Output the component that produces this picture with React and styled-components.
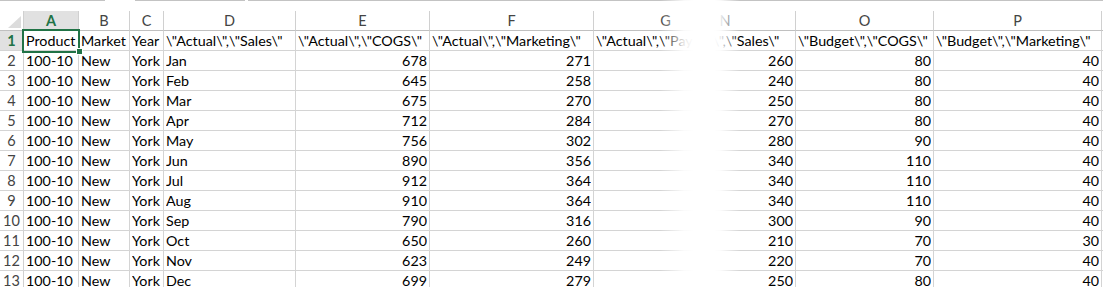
import React from "react";
import styled, { createGlobalStyle } from "styled-components";

const GlobalStyle = createGlobalStyle`
  body {
    margin: 0;
    background: #ffffff;
    font-family: Lato, "Liberation Sans", sans-serif;
  }
`;

const months = ["Jan", "Feb", "Mar", "Apr", "May", "Jun", "Jul", "Aug", "Sep", "Oct", "Nov", "Dec"];
const cogs = [678, 645, 675, 712, 756, 890, 912, 910, 790, 650, 623, 699];
const marketing = [271, 258, 270, 284, 302, 356, 364, 364, 316, 260, 249, 279];
const budgetSales = [260, 240, 250, 270, 280, 340, 340, 340, 300, 210, 220, 250];
const budgetCogs = [80, 80, 80, 80, 90, 110, 110, 110, 90, 70, 70, 80];
const budgetMkt = [40, 40, 40, 40, 40, 40, 40, 40, 40, 30, 40, 40];

const leftCols = [
  { key: "A", w: 55 },
  { key: "B", w: 51 },
  { key: "C", w: 34 },
  { key: "D", w: 132 },
  { key: "E", w: 134 },
  { key: "F", w: 164 },
  { key: "G", w: 144 },
];

const rightCols = [
  { key: "N", w: 141 },
  { key: "O", w: 138 },
  { key: "P", w: 168 },
  { key: "Q", w: 80 },
];

const titles = {
  A: "Product",
  B: "Market",
  C: "Year",
  D: '\\"Actual\\",\\"Sales\\"',
  E: '\\"Actual\\",\\"COGS\\"',
  F: '\\"Actual\\",\\"Marketing\\"',
  G: '\\"Actual\\",\\"Payroll\\"',
  N: '\\"Budget\\",\\"Sales\\"',
  O: '\\"Budget\\",\\"COGS\\"',
  P: '\\"Budget\\",\\"Marketing\\"',
  Q: "",
};

function valueFor(key, i) {
  switch (key) {
    case "A": return { text: "100-10" };
    case "B": return { text: "New" };
    case "C": return { text: "York" };
    case "D": return { text: months[i] };
    case "E": return { text: cogs[i], num: true };
    case "F": return { text: marketing[i], num: true };
    case "N": return { text: budgetSales[i], num: true };
    case "O": return { text: budgetCogs[i], num: true };
    case "P": return { text: budgetMkt[i], num: true };
    default: return { text: "" };
  }
}

const Page = styled.div`
  position: relative;
  width: 1103px;
  height: 287px;
  overflow: hidden;
  background: #fff;
`;

const TopEdge = styled.div`
  display: flex;
  height: 11px;
`;

const EdgeSegment = styled.div`
  height: 1px;
  background: #c3c3c3;
  width: ${(p) => (p.$w ? `${p.$w}px` : "auto")};
  flex: ${(p) => (p.$w ? "0 0 auto" : "1")};
  margin-left: ${(p) => p.$gap || 0}px;
`;

const Sheet = styled.div`
  display: flex;
`;

const Pane = styled.div`
  overflow: hidden;
  flex: ${(p) => (p.$w ? `0 0 ${p.$w}px` : "1")};
`;

const Grid = styled.div`
  width: max-content;
  margin-left: ${(p) => p.$shift || 0}px;
`;

const Row = styled.div`
  display: flex;
  height: 20px;
`;

const Corner = styled.div`
  width: 24px;
  height: 20px;
  box-sizing: border-box;
  border-right: 1px solid #d0d0d0;
  border-bottom: 1px solid #c0c0c0;
  display: flex;
  align-items: flex-end;
  justify-content: flex-end;
  padding: 0 2px 2px 0;
`;

const ColHead = styled.div`
  width: ${(p) => p.$w}px;
  height: 20px;
  box-sizing: border-box;
  border-right: 1px solid #d0d0d0;
  border-bottom: 1px solid #c0c0c0;
  background: ${(p) => (p.$active ? "#e1e1e1" : "#fff")};
  color: ${(p) => (p.$active ? "#217346" : "#444")};
  font-weight: ${(p) => (p.$active ? 700 : 400)};
  font-size: 14.5px;
  line-height: 19px;
  text-align: center;
`;

const RowHead = styled.div`
  width: 24px;
  height: 20px;
  box-sizing: border-box;
  border-right: 1px solid #d0d0d0;
  border-bottom: 1px solid #d4d4d4;
  background: ${(p) => (p.$active ? "#e1e1e1" : "#fff")};
  color: ${(p) => (p.$active ? "#217346" : "#444")};
  font-weight: ${(p) => (p.$active ? 700 : 400)};
  font-size: 14.5px;
  line-height: 20px;
  text-align: center;
  flex-shrink: 0;
`;

const Cell = styled.div`
  position: relative;
  width: ${(p) => p.$w}px;
  height: 20px;
  box-sizing: border-box;
  border-right: 1px solid #d4d4d4;
  border-bottom: 1px solid #d4d4d4;
  padding: 0 2px;
  font-size: 14.3px;
  line-height: 20px;
  color: #000;
  text-align: ${(p) => (p.$num ? "right" : "left")};
  white-space: nowrap;
  flex-shrink: 0;
`;

const CellText = styled.div`
  overflow: hidden;
`;

const ActiveFrame = styled.div`
  position: absolute;
  left: -2px;
  top: -2px;
  width: 58px;
  height: 24px;
  box-sizing: border-box;
  border: 2px solid #217346;
  z-index: 2;
  pointer-events: none;
`;

const FillHandle = styled.div`
  position: absolute;
  left: 52px;
  top: 17px;
  width: 5px;
  height: 5px;
  background: #217346;
  border: 1px solid #fff;
  z-index: 3;
`;

const Tear = styled.div`
  position: absolute;
  top: 0;
  bottom: 0;
  left: 660px;
  width: 80px;
  background: linear-gradient(
    to right,
    rgba(255, 255, 255, 0) 0%,
    rgba(255, 255, 255, 0.9) 30%,
    #fff 42%,
    #fff 68%,
    rgba(255, 255, 255, 0.9) 76%,
    rgba(255, 255, 255, 0) 100%
  );
  z-index: 5;
`;

function CornerMark() {
  return (
    <Corner>
      <svg width="13" height="12" viewBox="0 0 13 12">
        <polygon points="13,0 13,12 0,12" fill="#dcdcdc" />
      </svg>
    </Corner>
  );
}

function HeaderRow({ cols, withCorner }) {
  return (
    <Row>
      {withCorner && <CornerMark />}
      {cols.map((c) => (
        <ColHead key={c.key} $w={c.w} $active={c.key === "A"}>
          {c.key === "Q" ? "" : c.key}
        </ColHead>
      ))}
    </Row>
  );
}

function TitleRow({ cols, withHead }) {
  return (
    <Row>
      {withHead && <RowHead $active>1</RowHead>}
      {cols.map((c) => (
        <Cell key={c.key} $w={c.w}>
          <CellText>{titles[c.key]}</CellText>
          {c.key === "A" && (
            <>
              <ActiveFrame />
              <FillHandle />
            </>
          )}
        </Cell>
      ))}
    </Row>
  );
}

function DataRows({ cols, withHead }) {
  return months.map((m, i) => (
    <Row key={m}>
      {withHead && <RowHead>{i + 2}</RowHead>}
      {cols.map((c) => {
        const v = valueFor(c.key, i);
        return (
          <Cell key={c.key} $w={c.w} $num={v.num}>
            <CellText>{v.text}</CellText>
          </Cell>
        );
      })}
    </Row>
  ));
}

export default function App() {
  return (
    <>
      <GlobalStyle />
      <Page>
        <TopEdge>
          <EdgeSegment $w={105} />
          <EdgeSegment $w={110} $gap={30} />
          <EdgeSegment $gap={3} />
        </TopEdge>
        <Sheet>
          <Pane $w={705}>
            <Grid>
              <HeaderRow cols={leftCols} withCorner />
              <TitleRow cols={leftCols} withHead />
              <DataRows cols={leftCols} withHead />
            </Grid>
          </Pane>
          <Pane>
            <Grid $shift={-50}>
              <HeaderRow cols={rightCols} />
              <TitleRow cols={rightCols} />
              <DataRows cols={rightCols} />
            </Grid>
          </Pane>
        </Sheet>
        <Tear />
      </Page>
    </>
  );
}
